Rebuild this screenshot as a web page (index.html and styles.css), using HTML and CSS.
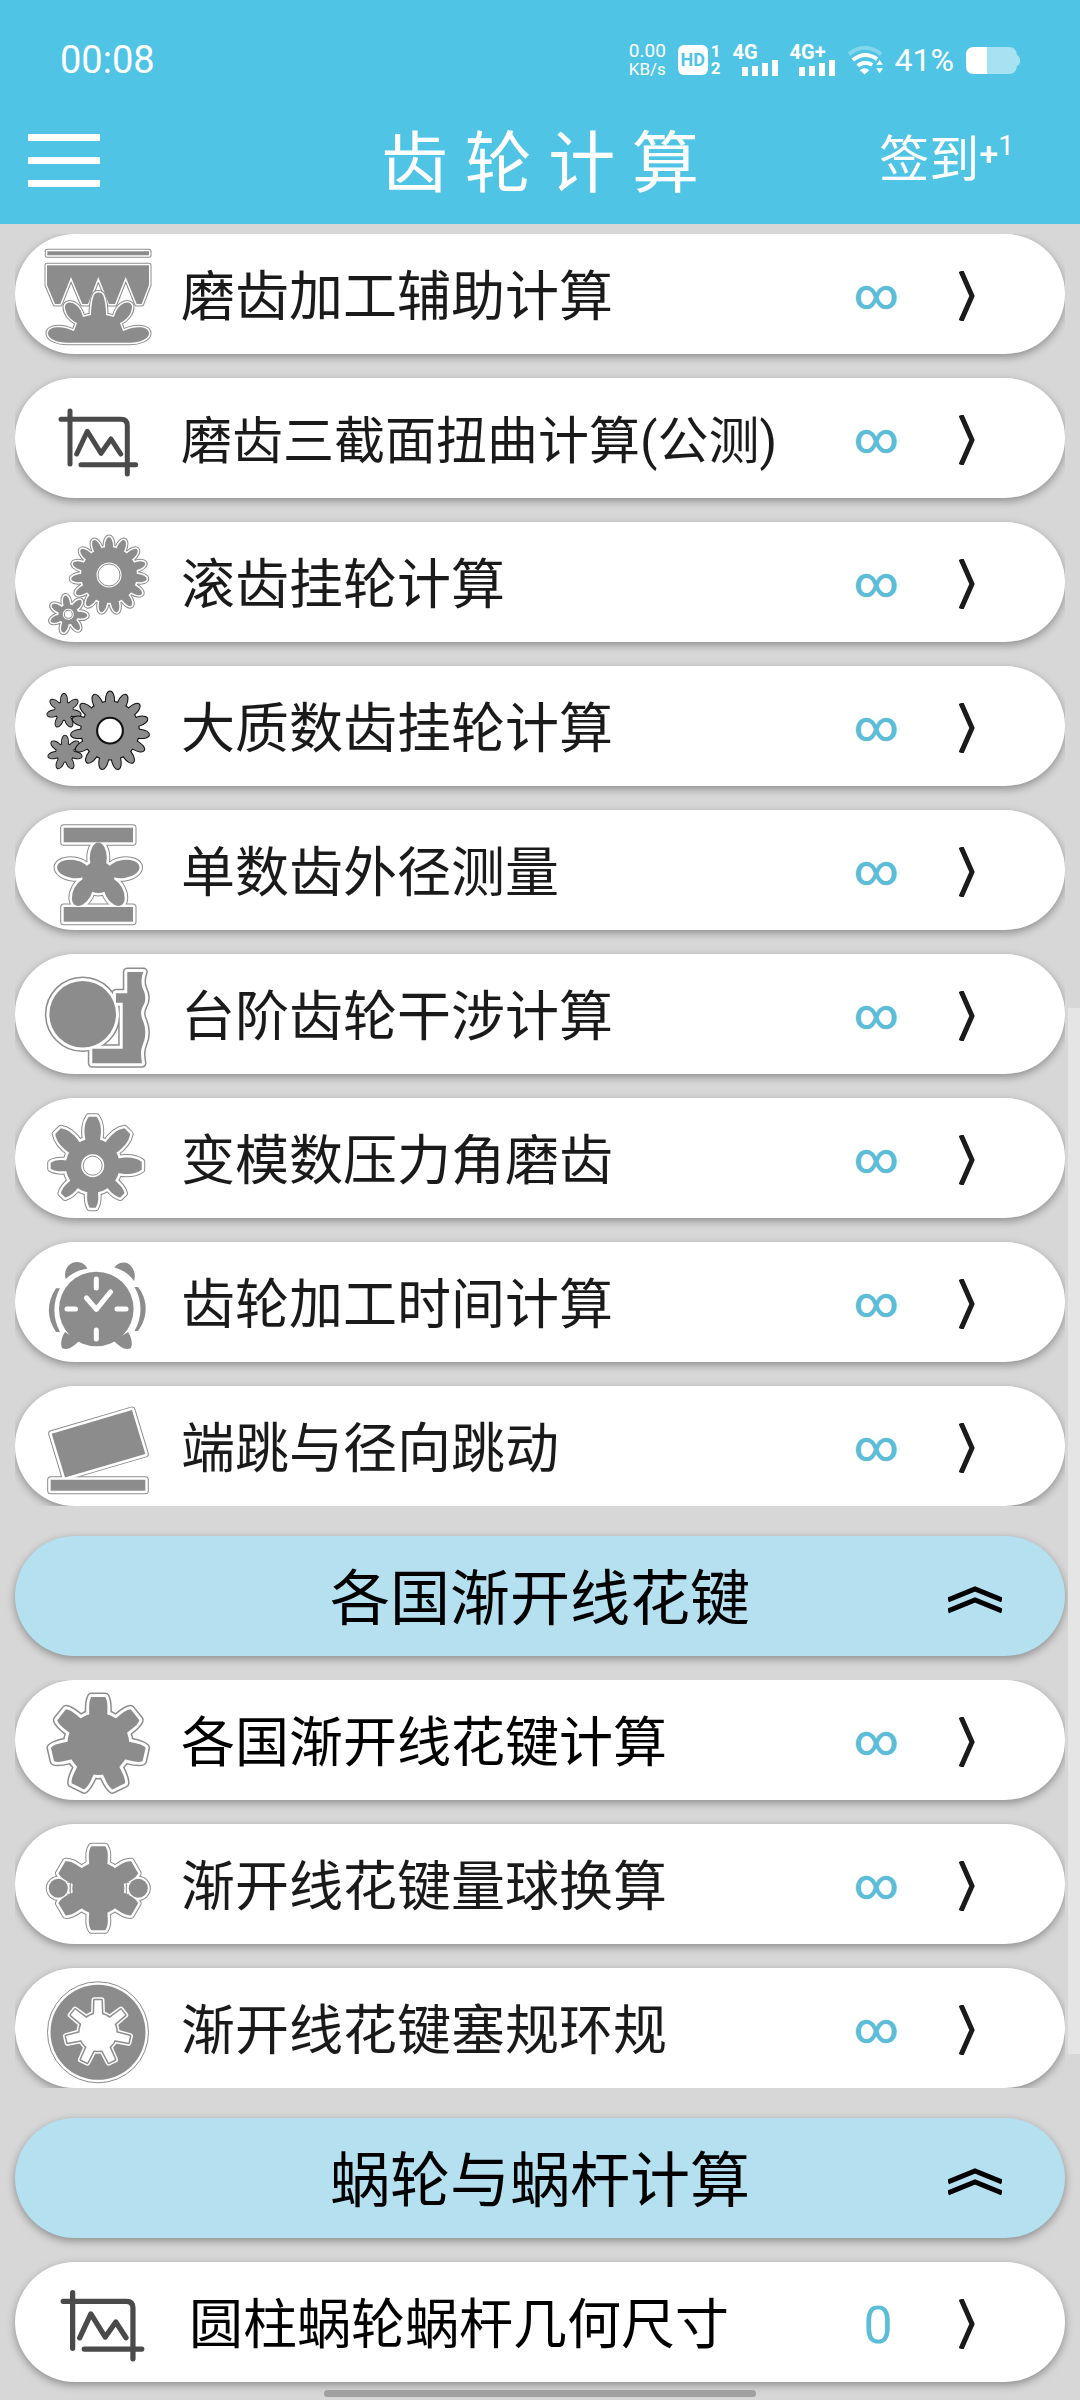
FILE: index.html
```
<!DOCTYPE html>
<html lang="zh-CN">
<head>
    <meta charset="UTF-8">
    <meta name="viewport" content="width=device-width, initial-scale=1.0">
    <title>齿轮计算</title>
    <link rel="stylesheet" href="styles.css">
</head>
<body>
    <!-- shared shapes for the icons -->
    <svg class="defs" width="0" height="0" aria-hidden="true">
        <defs>
            <ellipse id="tooth" cx="0" cy="-29" rx="4" ry="9"/>
            <g id="gear15">
                <circle r="28"/>
                <use href="#tooth"/>
                <use href="#tooth" transform="rotate(24)"/>
                <use href="#tooth" transform="rotate(48)"/>
                <use href="#tooth" transform="rotate(72)"/>
                <use href="#tooth" transform="rotate(96)"/>
                <use href="#tooth" transform="rotate(120)"/>
                <use href="#tooth" transform="rotate(144)"/>
                <use href="#tooth" transform="rotate(168)"/>
                <use href="#tooth" transform="rotate(192)"/>
                <use href="#tooth" transform="rotate(216)"/>
                <use href="#tooth" transform="rotate(240)"/>
                <use href="#tooth" transform="rotate(264)"/>
                <use href="#tooth" transform="rotate(288)"/>
                <use href="#tooth" transform="rotate(312)"/>
                <use href="#tooth" transform="rotate(336)"/>
            </g>
            <ellipse id="petal" cx="0" cy="-12" rx="3.4" ry="7"/>
            <g id="gear7">
                <circle r="10"/>
                <use href="#petal"/>
                <use href="#petal" transform="rotate(51.4)"/>
                <use href="#petal" transform="rotate(102.9)"/>
                <use href="#petal" transform="rotate(154.3)"/>
                <use href="#petal" transform="rotate(205.7)"/>
                <use href="#petal" transform="rotate(257.1)"/>
                <use href="#petal" transform="rotate(308.6)"/>
            </g>
            <path id="big-cog" d="M-7 -24C-9 -34 -9 -42 -4 -49H4C9 -42 9 -34 7 -24Z"/>
            <path id="small-cog" d="M-5 -24C-6 -32 -6 -37 -3 -42H3C6 -37 6 -32 5 -24Z"/>
            <g id="mixed-gear">
                <circle r="27"/>
                <use href="#big-cog"/>
                <use href="#big-cog" transform="rotate(45)"/>
                <use href="#big-cog" transform="rotate(90)"/>
                <use href="#small-cog" transform="rotate(135)"/>
                <use href="#small-cog" transform="rotate(180)"/>
                <use href="#small-cog" transform="rotate(225)"/>
                <use href="#small-cog" transform="rotate(270)"/>
                <use href="#big-cog" transform="rotate(315)"/>
            </g>
            <path id="key" d="M-9 -26C-9 -36 -10 -42 -7 -47H7C10 -42 9 -36 9 -26Z"/>
            <g id="spline7">
                <circle r="31"/>
                <use href="#key"/>
                <use href="#key" transform="rotate(51.4)"/>
                <use href="#key" transform="rotate(102.9)"/>
                <use href="#key" transform="rotate(154.3)"/>
                <use href="#key" transform="rotate(205.7)"/>
                <use href="#key" transform="rotate(257.1)"/>
                <use href="#key" transform="rotate(308.6)"/>
            </g>
            <path id="key-short" d="M-9 -20C-9 -30 -11 -36 -7 -42H7C11 -36 9 -30 9 -20Z"/>
            <g id="spline6">
                <circle r="26"/>
                <use href="#key-short"/>
                <use href="#key-short" transform="rotate(60)"/>
                <use href="#key-short" transform="rotate(120)"/>
                <use href="#key-short" transform="rotate(180)"/>
                <use href="#key-short" transform="rotate(240)"/>
                <use href="#key-short" transform="rotate(300)"/>
            </g>
            <path id="slot" d="M-4 -16L-3.500 -32H3.500L4 -16Z"/>
            <g id="ring7">
                <circle r="18.500"/>
                <use href="#slot"/>
                <use href="#slot" transform="rotate(51.4)"/>
                <use href="#slot" transform="rotate(102.9)"/>
                <use href="#slot" transform="rotate(154.3)"/>
                <use href="#slot" transform="rotate(205.7)"/>
                <use href="#slot" transform="rotate(257.1)"/>
                <use href="#slot" transform="rotate(308.6)"/>
            </g>
            <g id="grind">
                <path d="M7.300 17.300H109V21.300H7.300Z"/>
                <path d="M7 31.300H109V51L101.700 70H96.700L85.700 43L75 70H69L58.300 43L48 70H42.300L31 43L20.300 70H15L7 51Z"/>
            </g>
            <path id="grind-gear" d="M28 108.700C18 109 8 105 8 99.500C8 93 18 92 27 94.500L34 97L37 89C30 86 25 79 25 73C25 68 31 67 36 71C41 75 42 80 43 83L51 81C51 74 52 66 54 61C55.500 57.500 61.500 57.500 63 61C65 66 66 74 66 81L74 83C75 80 76 75 81 71C86 67 92 68 92 73C92 79 87 86 80 89L83 97L90 94.500C99 92 109 93 109 99.500C109 105 99 109 89 108.700Z"/>
            <g id="bars">
                <rect x="23.700" y="17.700" width="69.300" height="14.600"/>
                <rect x="23.700" y="97" width="69.300" height="14.700"/>
            </g>
            <g id="star">
                <circle cx="58.300" cy="67" r="16"/>
                <ellipse cx="58.300" cy="48" rx="8.500" ry="15.500"/>
                <ellipse cx="33" cy="59" rx="16" ry="9" transform="rotate(8 33 59)"/>
                <ellipse cx="83.600" cy="59" rx="16" ry="9" transform="rotate(-8 83.600 59)"/>
                <ellipse cx="42.500" cy="82" rx="9" ry="15" transform="rotate(28 42.500 82)"/>
                <ellipse cx="74.100" cy="82" rx="9" ry="15" transform="rotate(-28 74.100 82)"/>
            </g>
            <g id="step">
                <circle cx="42.700" cy="60.300" r="33.300"/>
                <path d="M87.300 18H103.300C101 24 101 30 103 35C106 41 106 47 103 52C100 58 101 62 103 67C106 74 106 83 103 90C100 97 101 102 102 109.300H52.300V94.700H82.700V48.700H76V39.300H87.300Z"/>
            </g>
            <g id="tilt">
                <path d="M11.700 47.700L92 24L105.300 68L25 91.500Z"/>
                <path d="M10.700 93.700H105.300V104.700H10.700Z"/>
            </g>
            <g id="crop-chart">
                <path d="M30 33V86M21 41.300H81Q87.300 41.300 87.300 47.600V96M41 86.700H95.700"/>
                <path d="M36.700 76L47.300 53.300L61 75.300L71 61L80.700 76"/>
            </g>
        </defs>
    </svg>

    <header class="header">
        <div class="status">
            <span class="time">00:08</span>
            <div class="indicators">
                <span class="speed">0.00<small>KB/s</small></span>
                <span class="volte"><b class="hd">HD</b><span class="sims"><b>1</b><b>2</b></span></span>
                <span class="signal">
                    <b>4G</b>
                    <svg width="36" height="16" viewBox="0 0 36 16"><path d="M0 7h6v9H0zM10 6h6v10h-6zM20 3h6v13h-6zM30 0h6v16h-6z"/></svg>
                </span>
                <span class="signal">
                    <b>4G+</b>
                    <svg width="36" height="16" viewBox="0 0 36 16"><path d="M0 7h6v9H0zM10 6h6v10h-6zM20 3h6v13h-6zM30 0h6v16h-6z"/></svg>
                </span>
                <svg class="wifi" width="36" height="30" viewBox="0 0 37 30">
                    <path class="faint" d="M2 9Q18 -4 35 9"/>
                    <path d="M6 15Q18 5 31 14M11 21Q18 15 26 20"/>
                    <path class="solid" d="M13 25.500Q18 21.500 23 25.500L18 30ZM30 20l3.500-5 3.500 5zM30 23.500l3.500 5 3.500-5z"/>
                </svg>
                <span class="percent">41%</span>
                <svg class="battery" width="54" height="27" viewBox="0 0 54 27">
                    <path class="level-bg" d="M21 0H43Q50 0 51 8Q54 9 54 13.500Q54 18 51 19Q50 27 43 27H21Z"/>
                    <path d="M21 0H8Q0 0 0 8V19Q0 27 8 27H21Z"/>
                </svg>
            </div>
        </div>
        <nav class="nav">
            <button class="menu" type="button" aria-label="菜单"><span></span><span></span><span></span></button>
            <h1 class="title">齿 轮 计 算</h1>
            <button class="checkin" type="button">签到<span class="plus">+</span><span class="one">1</span></button>
        </nav>
    </header>

    <main class="content">
        <ul class="list">
            <li><a class="card" href="#">
                <svg class="icon" viewBox="0 0 120 120">
                    <use class="edge thin" href="#grind"/><use class="gap thin" href="#grind"/><use href="#grind"/>
                    <use class="edge thin" href="#grind-gear"/><use class="gap thin" href="#grind-gear"/><use href="#grind-gear"/>
                </svg>
                <span class="label">磨齿加工辅助计算</span><span class="count">∞</span>
                <svg class="arrow" viewBox="0 0 16 50"><path d="M2 0L13 25L2 50"/></svg>
            </a></li>
            <li><a class="card" href="#">
                <svg class="icon line" viewBox="0 0 120 120"><use href="#crop-chart"/></svg>
                <span class="label small">磨齿三截面扭曲计算(公测)</span><span class="count">∞</span>
                <svg class="arrow" viewBox="0 0 16 50"><path d="M2 0L13 25L2 50"/></svg>
            </a></li>
            <li><a class="card" href="#">
                <svg class="icon" viewBox="0 0 120 120">
                    <g transform="translate(69 53)">
                        <use class="edge thin" href="#gear15"/><use class="gap thin" href="#gear15"/><use href="#gear15"/>
                        <circle class="hole" r="12.500"/><circle class="ring" r="11"/>
                    </g>
                    <g transform="translate(28.300 92.300) rotate(-9)">
                        <use class="edge thin" href="#gear7"/><use class="gap thin" href="#gear7"/><use href="#gear7"/>
                        <circle class="hole" r="5.500"/><circle class="ring" r="4"/>
                    </g>
                </svg>
                <span class="label">滚齿挂轮计算</span><span class="count">∞</span>
                <svg class="arrow" viewBox="0 0 16 50"><path d="M2 0L13 25L2 50"/></svg>
            </a></li>
            <li><a class="card" href="#">
                <svg class="icon" viewBox="0 0 120 120">
                    <g transform="translate(24 45) scale(0.900)"><use class="dark" href="#gear7"/><use href="#gear7"/></g>
                    <g transform="translate(25 86.700) scale(0.900)"><use class="dark" href="#gear7"/><use href="#gear7"/></g>
                    <g transform="translate(70 64.700) scale(1.030)">
                        <use class="dark" href="#gear15"/><use href="#gear15"/>
                        <circle class="hole dark" r="12.500"/>
                    </g>
                </svg>
                <span class="label">大质数齿挂轮计算</span><span class="count">∞</span>
                <svg class="arrow" viewBox="0 0 16 50"><path d="M2 0L13 25L2 50"/></svg>
            </a></li>
            <li><a class="card" href="#">
                <svg class="icon" viewBox="0 0 120 120">
                    <use class="edge" href="#star"/><use class="edge" href="#bars"/>
                    <use class="gap" href="#star"/><use class="gap" href="#bars"/>
                    <use href="#star"/><use href="#bars"/>
                </svg>
                <span class="label">单数齿外径测量</span><span class="count">∞</span>
                <svg class="arrow" viewBox="0 0 16 50"><path d="M2 0L13 25L2 50"/></svg>
            </a></li>
            <li><a class="card" href="#">
                <svg class="icon" viewBox="0 0 120 120">
                    <use class="edge wide" href="#step"/><use class="gap wide" href="#step"/><use href="#step"/>
                </svg>
                <span class="label">台阶齿轮干涉计算</span><span class="count">∞</span>
                <svg class="arrow" viewBox="0 0 16 50"><path d="M2 0L13 25L2 50"/></svg>
            </a></li>
            <li><a class="card" href="#">
                <svg class="icon" viewBox="0 0 120 120">
                    <g transform="translate(52.700 67.700)">
                        <use class="edge" href="#mixed-gear"/><use class="gap" href="#mixed-gear"/><use href="#mixed-gear"/>
                        <circle class="hole" r="11.500"/><circle class="ring" r="9.500"/>
                    </g>
                </svg>
                <span class="label">变模数压力角磨齿</span><span class="count">∞</span>
                <svg class="arrow" viewBox="0 0 16 50"><path d="M2 0L13 25L2 50"/></svg>
            </a></li>
            <li><a class="card" href="#">
                <svg class="icon" viewBox="0 0 120 120">
                    <circle cx="56.300" cy="67" r="37.300"/>
                    <path d="M25.700 37C23 28 29 20 36.700 20C41 20 45 22 47.500 26.500C39 28 32 31 25.700 37Z"/>
                    <path d="M94 39C97 30 91 20.500 84 20.500C80 20.500 76.500 22 74.500 25.500C83 28 89 32 94 39Z"/>
                    <path d="M16 46.300H20C12.500 60 12.500 76 20 90H16C6.500 76 6.500 60 16 46.300Z"/>
                    <path d="M94.500 45H98C108.500 58 108 76 98 89H94.500C102.500 75 102.500 59 94.500 45Z"/>
                    <path d="M25 90C22 94 20 101 22 106C27 109 33 105 39 99ZM88 90C91 94 93 101 91 106C86 109 80 105 74 99Z"/>
                    <path class="hands" d="M56.300 37V46M56.300 88V97M27 67H35.500M77 67H86M46.500 56L56.300 67.300L70.500 50"/>
                </svg>
                <span class="label">齿轮加工时间计算</span><span class="count">∞</span>
                <svg class="arrow" viewBox="0 0 16 50"><path d="M2 0L13 25L2 50"/></svg>
            </a></li>
            <li><a class="card" href="#">
                <svg class="icon" viewBox="0 0 120 120">
                    <use class="edge" href="#tilt"/><use class="gap" href="#tilt"/><use href="#tilt"/>
                </svg>
                <span class="label">端跳与径向跳动</span><span class="count">∞</span>
                <svg class="arrow" viewBox="0 0 16 50"><path d="M2 0L13 25L2 50"/></svg>
            </a></li>
        </ul>

        <button class="section" type="button">
            <span class="section-title">各国渐开线花键</span>
            <svg class="fold" viewBox="0 0 54 28"><path d="M0 14L27 3L54 14M0 25L27 14L54 25"/></svg>
        </button>
        <ul class="list">
            <li><a class="card" href="#">
                <svg class="icon" viewBox="0 0 120 120">
                    <g transform="translate(58.300 64)">
                        <use class="edge wide" href="#spline7"/><use class="gap wide" href="#spline7"/><use href="#spline7"/>
                    </g>
                </svg>
                <span class="label black">各国渐开线花键计算</span><span class="count">∞</span>
                <svg class="arrow" viewBox="0 0 16 50"><path d="M2 0L13 25L2 50"/></svg>
            </a></li>
            <li><a class="card" href="#">
                <svg class="icon" viewBox="0 0 120 120">
                    <g transform="translate(58.300 64.300)">
                        <use class="edge" href="#spline6"/>
                        <circle class="edge" cx="-40" r="9"/><circle class="edge" cx="40" r="9"/>
                        <use class="gap" href="#spline6"/>
                        <circle class="gap" cx="-40" r="9"/><circle class="gap" cx="40" r="9"/>
                        <use href="#spline6"/>
                        <path class="ring" d="M-31 -6H-28V6H-31M31 -6H28V6H31"/>
                        <circle cx="-40" r="9.500"/><circle cx="40" r="9.500"/>
                    </g>
                </svg>
                <span class="label">渐开线花键量球换算</span><span class="count">∞</span>
                <svg class="arrow" viewBox="0 0 16 50"><path d="M2 0L13 25L2 50"/></svg>
            </a></li>
            <li><a class="card" href="#">
                <svg class="icon" viewBox="0 0 120 120">
                    <g transform="translate(58 64.300)">
                        <circle class="ring" r="50.500"/><circle r="47.500"/>
                        <use class="slot-gap" href="#ring7"/><use class="slot-edge" href="#ring7"/><use class="hole" href="#ring7"/>
                    </g>
                </svg>
                <span class="label">渐开线花键塞规环规</span><span class="count">∞</span>
                <svg class="arrow" viewBox="0 0 16 50"><path d="M2 0L13 25L2 50"/></svg>
            </a></li>
        </ul>

        <button class="section" type="button">
            <span class="section-title">蜗轮与蜗杆计算</span>
            <svg class="fold" viewBox="0 0 54 28"><path d="M0 14L27 3L54 14M0 25L27 14L54 25"/></svg>
        </button>
        <ul class="list last">
            <li><a class="card" href="#">
                <svg class="icon line" viewBox="-1 4 114 114"><use href="#crop-chart"/></svg>
                <span class="label black indent">圆柱蜗轮蜗杆几何尺寸</span><span class="count number">0</span>
                <svg class="arrow" viewBox="0 0 16 50"><path d="M2 0L13 25L2 50"/></svg>
            </a></li>
        </ul>
    </main>

    <div class="scroll-thumb"></div>
    <div class="home-bar"></div>
</body>
</html>
```

FILE: styles.css
```
* {
    box-sizing: border-box;
}

body {
    margin: 0;
    min-height: 100vh;
    position: relative;
    background: #d7d7d7;
    color: #1a1a1a;
    font-family: Roboto, "Noto Sans CJK SC", sans-serif;
}

button {
    margin: 0;
    padding: 0;
    border: none;
    background: none;
    color: inherit;
    font-family: inherit;
    cursor: pointer;
}

svg {
    display: block;
}

.defs {
    position: absolute;
}

/* header */
.header {
    height: 224px;
    background: #50c4e5;
    color: #fff;
}

.status {
    display: flex;
    justify-content: space-between;
    align-items: center;
    height: 100px;
    padding: 20px 60px 0;
}

.time {
    font-size: 38px;
}

.indicators {
    display: flex;
    align-items: center;
    gap: 12px;
    fill: #fff;
}

.speed {
    display: flex;
    flex-direction: column;
    align-items: center;
    font-size: 19px;
    line-height: 18px;
}

.speed small {
    font-size: 17px;
}

.volte {
    display: flex;
    align-items: center;
    gap: 3px;
}

.hd {
    width: 30px;
    height: 30px;
    border-radius: 6px;
    background: #fff;
    color: #50c4e5;
    font-size: 18px;
    line-height: 30px;
    text-align: center;
}

.sims {
    display: flex;
    flex-direction: column;
    font-size: 17px;
    line-height: 17px;
}

.signal {
    display: flex;
    flex-direction: column;
    align-items: flex-end;
    width: 45px;
}

.signal b {
    align-self: flex-start;
    font-size: 20px;
    line-height: 15px;
}

.wifi path {
    fill: none;
    stroke: #fff;
    stroke-width: 4;
}

.wifi .faint {
    opacity: 0.3;
}

.wifi .solid {
    fill: #fff;
    stroke: none;
}

.percent {
    font-size: 32px;
}

.level-bg {
    opacity: 0.5;
}

.nav {
    display: grid;
    grid-template-columns: 1fr auto 1fr;
    align-items: center;
    height: 120px;
    padding: 0 28px;
}

.menu {
    display: flex;
    flex-direction: column;
    gap: 16px;
    width: 72px;
}

.menu span {
    height: 7px;
    background: #fff;
}

.title {
    margin: 0;
    padding-top: 8px;
    font-size: 67px;
    font-weight: 400;
    line-height: 80px;
}

.checkin {
    display: flex;
    justify-self: end;
    margin-right: 38px;
    font-size: 50px;
    line-height: 60px;
}

.plus {
    font-size: 34px;
    font-weight: 500;
    line-height: 46px;
}

.one {
    font-size: 28px;
    line-height: 32px;
}

/* list */
.content {
    padding: 10px 15px 0;
}

.list {
    display: flex;
    flex-direction: column;
    gap: 24px;
    margin: 0;
    padding: 0;
    list-style: none;
    overflow: hidden;
}

.last {
    overflow: visible;
}

.card {
    display: grid;
    grid-template-columns: 120px 1fr 100px 82px;
    align-items: center;
    height: 120px;
    padding: 0 57px 0 25px;
    border-radius: 60px;
    background: #fff;
    box-shadow: 0 3px 8px rgba(0, 0, 0, 0.35);
    color: inherit;
    text-decoration: none;
}

.label {
    padding-top: 8px;
    padding-left: 21px;
    font-size: 54px;
    line-height: 80px;
    white-space: nowrap;
}

.small {
    font-size: 51px;
}

.black {
    color: #000;
}

.indent {
    padding-left: 29px;
}

.count {
    color: #5bbdd8;
    font-size: 43px;
    font-weight: 500;
    line-height: 80px;
    text-align: center;
}

.number {
    padding-top: 8px;
    padding-left: 4px;
    font-size: 52px;
    font-weight: 400;
}

.arrow {
    justify-self: center;
    width: 16px;
    height: 50px;
    margin-top: 4px;
    fill: none;
    stroke: #1a1a1a;
    stroke-width: 5;
}

.section {
    display: grid;
    grid-template-columns: 1fr auto 1fr;
    align-items: center;
    width: 100%;
    height: 120px;
    margin: 30px 0 24px;
    padding: 0 63px;
    border-radius: 60px;
    background: #b4e0f0;
    box-shadow: 0 3px 8px rgba(0, 0, 0, 0.35);
    color: #000;
}

.section-title {
    grid-column: 2;
    padding-top: 8px;
    font-size: 60px;
    line-height: 80px;
}

.fold {
    justify-self: end;
    width: 54px;
    height: 28px;
    margin-top: 8px;
    fill: none;
    stroke: #000;
    stroke-width: 5;
}

/* icons */
.icon {
    width: 120px;
    height: 120px;
    fill: #8c8c8c;
    stroke-linejoin: round;
}

.line {
    fill: none;
    stroke: #4a4a4a;
    stroke-width: 5;
    stroke-linecap: round;
}

.edge {
    stroke: #8c8c8c;
    stroke-width: 7;
}

.gap {
    stroke: #fff;
    stroke-width: 5;
}

.edge.thin {
    stroke-width: 5;
}

.gap.thin {
    stroke-width: 3;
}

.edge.wide {
    stroke-width: 9;
}

.gap.wide {
    stroke-width: 6;
}

.dark {
    stroke: #111;
    stroke-width: 2;
}

.hole {
    fill: #fff;
}

.ring {
    fill: none;
    stroke: #8c8c8c;
    stroke-width: 1;
}

.slot-gap {
    stroke: #fff;
    stroke-width: 6;
}

.slot-edge {
    stroke: #8c8c8c;
    stroke-width: 3;
}

.hands {
    fill: none;
    stroke: #fff;
    stroke-width: 5;
    stroke-linecap: round;
}

/* system overlays */
.scroll-thumb {
    position: absolute;
    top: 42%;
    right: 0;
    width: 12px;
    height: 43.6%;
    background: #e5e5e5;
}

.home-bar {
    position: absolute;
    bottom: 3px;
    left: 30%;
    width: 40%;
    height: 7px;
    border-radius: 4px;
    background: #a0a0a0;
}
```
